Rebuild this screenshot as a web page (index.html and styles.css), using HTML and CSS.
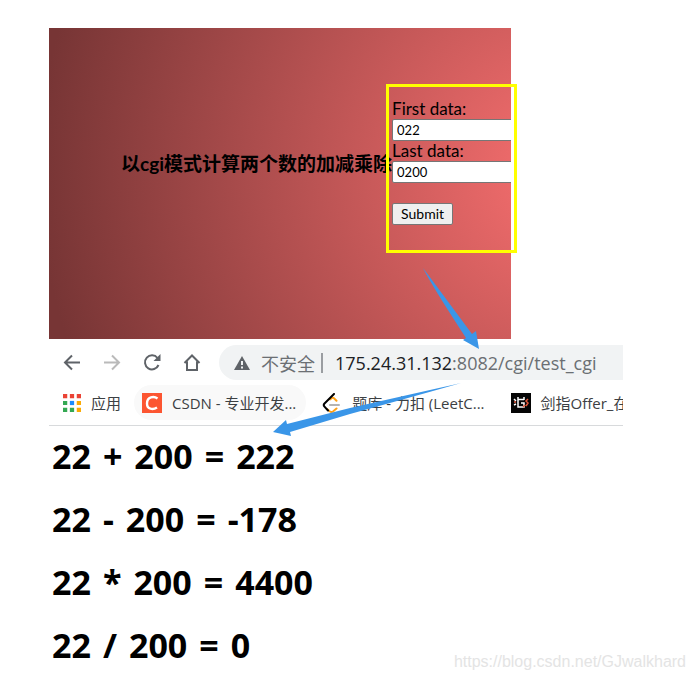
FILE: index.html
```html
<!DOCTYPE html>
<html lang="zh-CN">
<head>
<meta charset="utf-8">
<title>CGI 计算器</title>
<link rel="stylesheet" href="styles.css">
</head>
<body>
<main class="page">
  <section class="hero">
    <h3 class="hero-title">以cgi模式计算两个数的加减乘除</h3>
    <form class="calc">
      <div class="fields">
        <label for="first">First data:</label>
        <input id="first" type="text" value="022">
        <label for="last">Last data:</label>
        <input id="last" type="text" value="0200">
        <button type="button">Submit</button>
      </div>
    </form>
  </section>

  <section class="browser">
    <nav class="toolbar" aria-label="浏览器">
      <button class="tool" type="button" aria-label="后退"><svg viewBox="0 0 18 18"><path d="M17 8.500H2M9 1.500L2 8.500l7 7"/></svg></button>
      <button class="tool off" type="button" aria-label="前进"><svg viewBox="0 0 18 18"><path d="M1 8.500h15M9 1.500l7 7-7 7"/></svg></button>
      <button class="tool" type="button" aria-label="刷新"><svg viewBox="0 0 18 18"><path d="M14.500 4A7 7 0 1 0 15.500 11"/><path class="solid" d="M17.500 0v7h-7z"/></svg></button>
      <button class="tool" type="button" aria-label="主页"><svg viewBox="0 0 18 18"><path d="M1.500 9L9 1.500 16.500 9M4 7.500V16h10V7.500"/></svg></button>
      <div class="address">
        <svg class="warn" viewBox="0 0 16 14"><path d="M8 0l8 14H0z" fill="#5f6368"/><path d="M8 5v4M8 10.500v2" stroke="#f1f3f4" stroke-width="2"/></svg>
        <span class="unsafe">不安全</span>
        <span class="bar"></span>
        <span class="url"><b>175.24.31.132</b>:8082/cgi/test_cgi</span>
      </div>
    </nav>
    <nav class="bookmarks" aria-label="书签">
      <a class="mark apps" href="#"><svg viewBox="0 0 17 17"><path fill="#ea4335" d="M0 0h4v4H0zM6.500 0h4v4h-4zM13 0h4v4h-4z"/><path fill="#34a853" d="M0 6.500h4v4H0zM0 13h4v4H0zM6.500 13h4v4h-4z"/><path fill="#1a8cff" d="M6.500 6.500h4v4h-4z"/><path fill="#fbab05" d="M13 6.500h4v4h-4zM13 13h4v4h-4z"/></svg>应用</a>
      <a class="mark hover" href="#"><svg viewBox="0 0 20 20"><path fill="#fc5531" d="M0 0h20v20H0z"/><path d="M15.500 5.500C12 2.800 5 3.500 5 10.500c0 6 6 6.500 10 4" fill="none" stroke="#fff" stroke-width="2.400"/></svg>CSDN - 专业开发...</a>
      <a class="mark" href="#"><svg viewBox="0 0 20 20" fill="none" stroke-width="2" stroke-linecap="round"><path stroke="#b3b3b3" d="M8 12h9"/><path stroke="#ffa116" d="M8 6.500l2-1.500q1-.6 2 .3l2.500 2.500M5 16l3 2.500q1.500 1 3 0l3.500-3"/><path stroke="#000" d="M12 1L2.500 10.500q-1.500 1.500 0 3.200L6 17.500"/></svg>题库 - 力扣 (LeetC...</a>
      <a class="mark" href="#"><svg viewBox="0 0 20 20"><path fill="#050505" d="M0 0h20v20H0z"/><g fill="none" stroke="#fff" stroke-width="1.500"><path d="M13 6.500H7v7.500h6v-4h-3M7 4v2M13 4v3M3 6l2 2M3 12l2-1"/></g><path d="M17 6l-2 2 2 2-2 3M3 9h2M12 14l2-2" fill="none" stroke="#e2573b" stroke-width="1.500"/></svg>剑指Offer_在</a>
    </nav>
    <div class="results">
      <h1><span>22</span> <span>+</span> <span>200</span> <span>=</span> <span>222</span></h1>
      <h1><span>22</span> <span>-</span> <span>200</span> <span>=</span> <span>-178</span></h1>
      <h1><span>22</span> <span>*</span> <span>200</span> <span>=</span> <span>4400</span></h1>
      <h1><span>22</span> <span>/</span> <span>200</span> <span>=</span> <span>0</span></h1>
    </div>
  </section>
  <svg class="arrows" width="694" height="680" viewBox="0 0 694 680" aria-hidden="true"><path d="M423 268Q432 286 466 338l-3 2 16 9-3-18-4 3Q438 288 423 268zM461 383Q430 390 350 408L287 424l-1-4-13 12 18 4-1-4L350 414Q430 392 461 383z"/></svg>
  <p class="watermark">https://blog.csdn.net/GJwalkhard</p>
</main>
</body>
</html>
```
FILE: styles.css
```css
* { box-sizing: border-box; }
body { margin: 0; background: #fff; color: #000; }
.page { position: relative; min-height: 680px; padding: 28px 71px 0 49px; }
h1, h3, p { margin: 0; }

.hero {
  display: flex;
  justify-content: flex-end;
  align-items: center;
  width: 80.5%;
  padding: 56px 0 86px;
  background: radial-gradient(circle at 113% 46%, #fa7070, #773535 97%);
}
.hero-title {
  flex: none;
  font: bold 19px/28px Lato, "Noto Sans CJK SC", sans-serif;
  padding-bottom: 10px;
}
.calc { position: relative; flex: none; width: 119px; }
.calc::after {
  content: "";
  position: absolute;
  inset: 0 -6px 0 -6px;
  border: 3px solid #ff0;
  pointer-events: none;
}
.fields {
  display: flex;
  flex-direction: column;
  align-items: flex-start;
  overflow: hidden;
  padding: 15px 0 28px;
  font: 17px/20px Lato, sans-serif;
}
.fields input {
  width: 160px;
  height: 22px;
  padding: 0 4px;
  border: 1px solid #767676;
  border-radius: 2px;
  font: 13px/20px Lato, sans-serif;
}
.fields button {
  height: 22px;
  margin-top: 20px;
  padding: 0 8px;
  border: 1px solid #767676;
  border-radius: 2px;
  background: #efefef;
  font: 14px/20px Lato, sans-serif;
}

.browser { font-family: "Open Sans", "Noto Sans CJK SC", sans-serif; }
.toolbar { display: flex; align-items: center; padding-top: 6px; }
.tool {
  flex: none;
  width: 40px;
  height: 34px;
  padding: 0 8px 0 14px;
  border: 0;
  background: none;
}
.tool svg { display: block; width: 18px; height: 18px; fill: none; stroke: #5f6368; stroke-width: 2; }
.tool .solid { fill: #5f6368; stroke: none; }
.tool.off svg { stroke: #bababa; }
.address {
  display: flex;
  flex: 1;
  align-items: center;
  height: 35px;
  margin-left: 10px;
  padding-left: 15px;
  border-radius: 18px 0 0 18px;
  background: #f1f3f4;
  color: #6b6f73;
  font-size: 18px;
  white-space: nowrap;
}
.warn { width: 16px; height: 14px; margin-right: 11px; }
.bar { width: 2px; height: 20px; margin: 0 12px 0 6px; background: #9a9da1; }
.url b { color: #202124; font-weight: normal; }

.bookmarks {
  display: flex;
  gap: 8px;
  align-items: center;
  height: 46px;
  overflow: hidden;
  border-bottom: 1px solid #d8dadc;
}
.mark {
  display: flex;
  flex: none;
  align-items: center;
  gap: 10px;
  height: 35px;
  padding: 0 10px 0 8px;
  border-radius: 18px;
  color: #3c4043;
  font-size: 15px;
  text-decoration: none;
  white-space: nowrap;
}
.mark.apps { padding: 0 5px 0 14px; }
.mark.hover { background: #f9f9f9; }
.mark svg { width: 20px; height: 20px; }
.mark.apps svg { width: 18px; height: 18px; }

.results { display: grid; gap: 17px; padding: 7px 0 0 3px; }
.results h1 { display: flex; gap: 12px; font-size: 34px; line-height: 46px; }

.arrows { position: absolute; top: 0; left: 0; fill: #3a96e8; pointer-events: none; }
.watermark {
  position: absolute;
  right: 8px;
  bottom: 9px;
  color: #e4e4e4;
  font: 16px/18px "Liberation Sans", sans-serif;
}
```
